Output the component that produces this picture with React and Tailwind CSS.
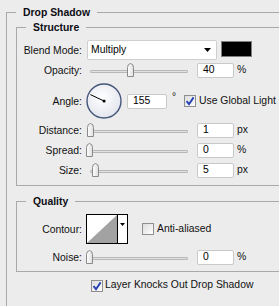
import React from "react";

const line = "border-[#a9a9a9]";

function Group({ title, className = "", bodyClassName = "", children }) {
  return (
    <div className={className}>
      <div className="flex h-[13px] items-start">
        <div className={`mt-[6px] h-[7px] w-[10px] border-l border-t ${line}`} />
        <span className="px-[7px] font-bold leading-[13px] text-[#0d0d14]">{title}</span>
        <div className="mt-[6px] h-px flex-1 bg-[#a9a9a9]" />
      </div>
      <div className={`border-b border-l border-r ${line} ${bodyClassName}`}>{children}</div>
    </div>
  );
}

function Label({ children }) {
  return <div className="w-[65px] shrink-0 text-right leading-[13px]">{children}</div>;
}

function Checkbox({ checked }) {
  return (
    <span className="grid h-[12px] w-[12px] shrink-0 place-items-center border border-[#8e8f8f] bg-gradient-to-br from-[#dcdcdc] to-white">
      {checked && (
        <svg width="10" height="10" viewBox="0 0 10 10">
          <path d="M1.6 5.2 L4 8.2 L8.6 1.4" fill="none" stroke="#2541b2" strokeWidth="1.9" />
        </svg>
      )}
    </span>
  );
}

function Field({ value, className = "w-[37px]" }) {
  return (
    <div className={`flex h-[15px] items-center rounded-[2px] border border-[#c9c9c9] bg-white pl-[5px] leading-none text-black ${className}`}>
      {value}
    </div>
  );
}

function Slider({ label, thumb, value, unit, className = "mt-[5px]" }) {
  return (
    <div className={`flex h-[15px] items-center ${className}`}>
      <Label>{label}</Label>
      <div className="relative ml-[4px] h-[15px] w-[104px]">
        <div className="ml-[4px] mt-[7px] h-[3px] w-[98px] rounded-[1px] border border-[#b7b7b7] bg-[#e2e2e2]" />
        <svg className="absolute top-0" style={{ left: thumb }} width="7" height="14" viewBox="0 0 7 14">
          <defs>
            <linearGradient id="thumbFill" x1="0" y1="0" x2="1" y2="0">
              <stop offset="0" stopColor="#ffffff" />
              <stop offset="1" stopColor="#dedede" />
            </linearGradient>
          </defs>
          <path d="M0.5 13.5V4.5Q0.5 1 3.5 0.5Q6.5 1 6.5 4.5V13.5Z" fill="url(#thumbFill)" stroke="#8a8a8a" />
        </svg>
      </div>
      <Field value={value} className="ml-[7px] w-[37px]" />
      <span className="ml-[3px] leading-none">{unit}</span>
    </div>
  );
}

function AngleDial() {
  return (
    <svg width="36" height="36" viewBox="0 0 36 36" className="ml-[4px] shrink-0">
      <defs>
        <radialGradient id="dialFill" cx="0.45" cy="0.4" r="0.6">
          <stop offset="0" stopColor="#ffffff" />
          <stop offset="1" stopColor="#e3e6ee" />
        </radialGradient>
      </defs>
      <circle cx="18" cy="18" r="17" fill="url(#dialFill)" stroke="#45557a" strokeWidth="1.4" />
      <line x1="18" y1="18" x2="4.4" y2="11.6" stroke="#000" strokeWidth="1" />
      <rect x="16.8" y="16.8" width="2.6" height="2.6" fill="#000" />
    </svg>
  );
}

export default function App() {
  return (
    <div className="h-[306px] w-[279px] overflow-hidden bg-[#ececec] font-['Liberation_Sans',Arial,sans-serif] text-[10.4px] text-[#111]">
      <Group title="Drop Shadow" className="ml-[6px] w-[330px] pt-[6px]" bodyClassName="h-[340px] pl-[9px] pt-[2px]">
        <Group title="Structure" bodyClassName="pb-[7px] pt-[6px]">
          <div className="flex h-[20px] items-start">
            <div className="self-center">
              <Label>Blend Mode:</Label>
            </div>
            <div className="ml-[5px] flex h-[20px] w-[130px] items-center justify-between rounded-[2px] border border-[#cfcfcf] bg-white pl-[3px] pr-[5px] text-black">
              <span>Multiply</span>
              <svg width="7" height="4" viewBox="0 0 7 4">
                <path d="M0 0H7L3.5 4Z" fill="#000" />
              </svg>
            </div>
            <div className="ml-[4px] mt-[1px] h-[16px] w-[31px] border border-[#7f7f7f] bg-black" />
          </div>

          <Slider label="Opacity:" thumb={41} value="40" unit="%" className="mt-[3px]" />

          <div className="mt-[5px] flex h-[36px] items-center">
            <Label>Angle:</Label>
            <AngleDial />
            <Field value="155" className="ml-[5px] w-[40px]" />
            <span className="ml-[5px] w-[12px] self-start pt-[9px] leading-none">°</span>
            <Checkbox checked />
            <span className="ml-[3px] leading-none">Use Global Light</span>
          </div>

          <Slider label="Distance:" thumb={1} value="1" unit="px" className="mt-[4px]" />
          <Slider label="Spread:" thumb={0} value="0" unit="%" />
          <Slider label="Size:" thumb={6} value="5" unit="px" />
        </Group>

        <Group title="Quality" className="mt-[9px]" bodyClassName="pb-[6px] pt-[6px]">
          <div className="flex h-[30px] items-center">
            <Label>Contour:</Label>
            <div className="ml-[4px] flex h-[30px] w-[42px] border border-black bg-white">
              <svg width="30" height="28" viewBox="0 0 30 28" className="shrink-0">
                <path d="M0 28L30 0V28Z" fill="#a2a2a2" />
              </svg>
              <div className="flex flex-1 justify-center border-l border-black pt-[8px]">
                <svg width="5" height="3" viewBox="0 0 5 3">
                  <path d="M0 0H5L2.5 3Z" fill="#000" />
                </svg>
              </div>
            </div>
            <div className="ml-[14px]">
              <Checkbox />
            </div>
            <span className="ml-[3px] leading-none">Anti-aliased</span>
          </div>
          <Slider label="Noise:" thumb={0} value="0" unit="%" className="mt-[6px]" />
        </Group>

        <div className="ml-[75px] mt-[7px] flex h-[13px] items-center">
          <Checkbox checked />
          <span className="ml-[2px] leading-none">Layer Knocks Out Drop Shadow</span>
        </div>
      </Group>
    </div>
  );
}
